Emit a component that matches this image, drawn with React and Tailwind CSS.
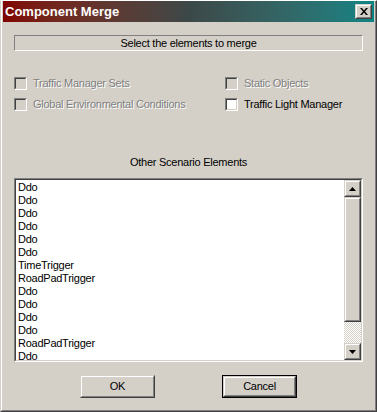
import React from 'react'

const FONT = { fontFamily: '"Liberation Sans", Arial, sans-serif' }

const ITEMS = [
  'Ddo', 'Ddo', 'Ddo', 'Ddo', 'Ddo', 'Ddo', 'TimeTrigger', 'RoadPadTrigger',
  'Ddo', 'Ddo', 'Ddo', 'Ddo', 'RoadPadTrigger', 'Ddo',
]

function Raised({ className = '', children }) {
  return (
    <div className={'border border-t-[#d4d0c8] border-l-[#d4d0c8] border-r-[#404040] border-b-[#404040] ' + className}>
      <div className="w-full h-full border border-t-white border-l-white border-r-[#808080] border-b-[#808080] bg-[#d4d0c8] flex items-center justify-center">
        {children}
      </div>
    </div>
  )
}

function Checkbox({ label, disabled }) {
  return (
    <div className="flex items-center h-[13px]">
      <div className="w-[13px] h-[13px] border border-t-[#808080] border-l-[#808080] border-r-white border-b-white">
        <div className={'w-full h-full border border-t-[#404040] border-l-[#404040] border-r-[#d4d0c8] border-b-[#d4d0c8] ' + (disabled ? 'bg-[#d4d0c8]' : 'bg-white')} />
      </div>
      <span className={'ml-[6px] text-[11px] leading-[13px] tracking-[-0.25px] ' + (disabled ? 'text-[#808080] [text-shadow:1px_1px_0_#ffffff]' : 'text-black')}>
        {label}
      </span>
    </div>
  )
}

function Arrow({ up }) {
  return (
    <svg width="7" height="4" viewBox="0 0 7 4">
      {up ? <path d="M3.5 0 L7 4 L0 4 Z" fill="#000" /> : <path d="M0 0 L7 0 L3.5 4 Z" fill="#000" />}
    </svg>
  )
}

export default function App() {
  return (
    <div style={FONT} className="w-[377px] h-[412px] bg-[#d4d0c8] border-l border-t border-t-white border-l-[#d4d0c8] border-r border-b border-r-[#404040] border-b-[#404040] overflow-hidden">
      <div className="h-full border-l border-r border-b border-l-white border-r-[#808080] border-b-[#808080] px-px flex flex-col">
        {/* Title bar */}
        <div className="h-[21px] flex items-center justify-between bg-gradient-to-r from-[#800000] via-[#3c4848] to-[#088484] pl-[2px] pr-[2px]">
          <span className="text-white font-bold text-[13px] leading-none">Component Merge</span>
          <Raised className="w-[17px] h-[15px]">
            <svg width="8" height="7" viewBox="0 0 8 7">
              <path d="M0 0 L2 0 L4 2.5 L6 0 L8 0 L5 3.5 L8 7 L6 7 L4 4.5 L2 7 L0 7 L3 3.5 Z" fill="#000" />
            </svg>
          </Raised>
        </div>

        <div className="px-[11px] flex flex-col tracking-[-0.25px]">
          {/* Static caption */}
          <div className="mt-[13px] h-[16px] border border-t-[#808080] border-l-[#808080] border-r-white border-b-white flex items-center justify-center text-[11px] text-black">
            Select the elements to merge
          </div>

          {/* Checkboxes */}
          <div className="mt-[26px] grid grid-cols-[211px_1fr] gap-y-[8px]">
            <Checkbox label="Traffic Manager Sets" disabled />
            <Checkbox label="Static Objects" disabled />
            <Checkbox label="Global Environmental Conditions" disabled />
            <Checkbox label="Traffic Light Manager" />
          </div>

          <div className="mt-[45px] h-[13px] text-center text-[11px] leading-[13px] text-black">Other Scenario Elements</div>

          {/* Listbox */}
          <div className="mt-[9px] h-[184px] border border-t-[#808080] border-l-[#808080] border-r-white border-b-white">
            <div className="h-full border border-t-[#404040] border-l-[#404040] border-r-[#d4d0c8] border-b-[#d4d0c8] bg-white flex">
              <div className="flex-1 overflow-hidden pl-[2px] pt-px">
                {ITEMS.map((t, i) => (
                  <div key={i} className="text-[11px] leading-[13px] h-[13px] text-black">{t}</div>
                ))}
              </div>
              <div className="w-[17px] flex flex-col bg-[#d4d0c8]">
                <Raised className="w-[17px] h-[17px]"><Arrow up /></Raised>
                <Raised className="w-[17px] h-[125px]" />
                <div className="flex-1 bg-[image:repeating-conic-gradient(#ffffff_0%_25%,#d4d0c8_0%_50%)] bg-[length:2px_2px]" />
                <Raised className="w-[17px] h-[17px]"><Arrow /></Raised>
              </div>
            </div>
          </div>

          {/* Buttons */}
          <div className="mt-[13px] flex pl-[66px] gap-[67px]">
            <Raised className="w-[75px] h-[23px]">
              <span className="text-[11px] text-black">OK</span>
            </Raised>
            <div className="w-[75px] h-[23px] border border-black">
              <Raised className="w-full h-full">
                <span className="text-[11px] text-black">Cancel</span>
              </Raised>
            </div>
          </div>
        </div>
      </div>
    </div>
  )
}
